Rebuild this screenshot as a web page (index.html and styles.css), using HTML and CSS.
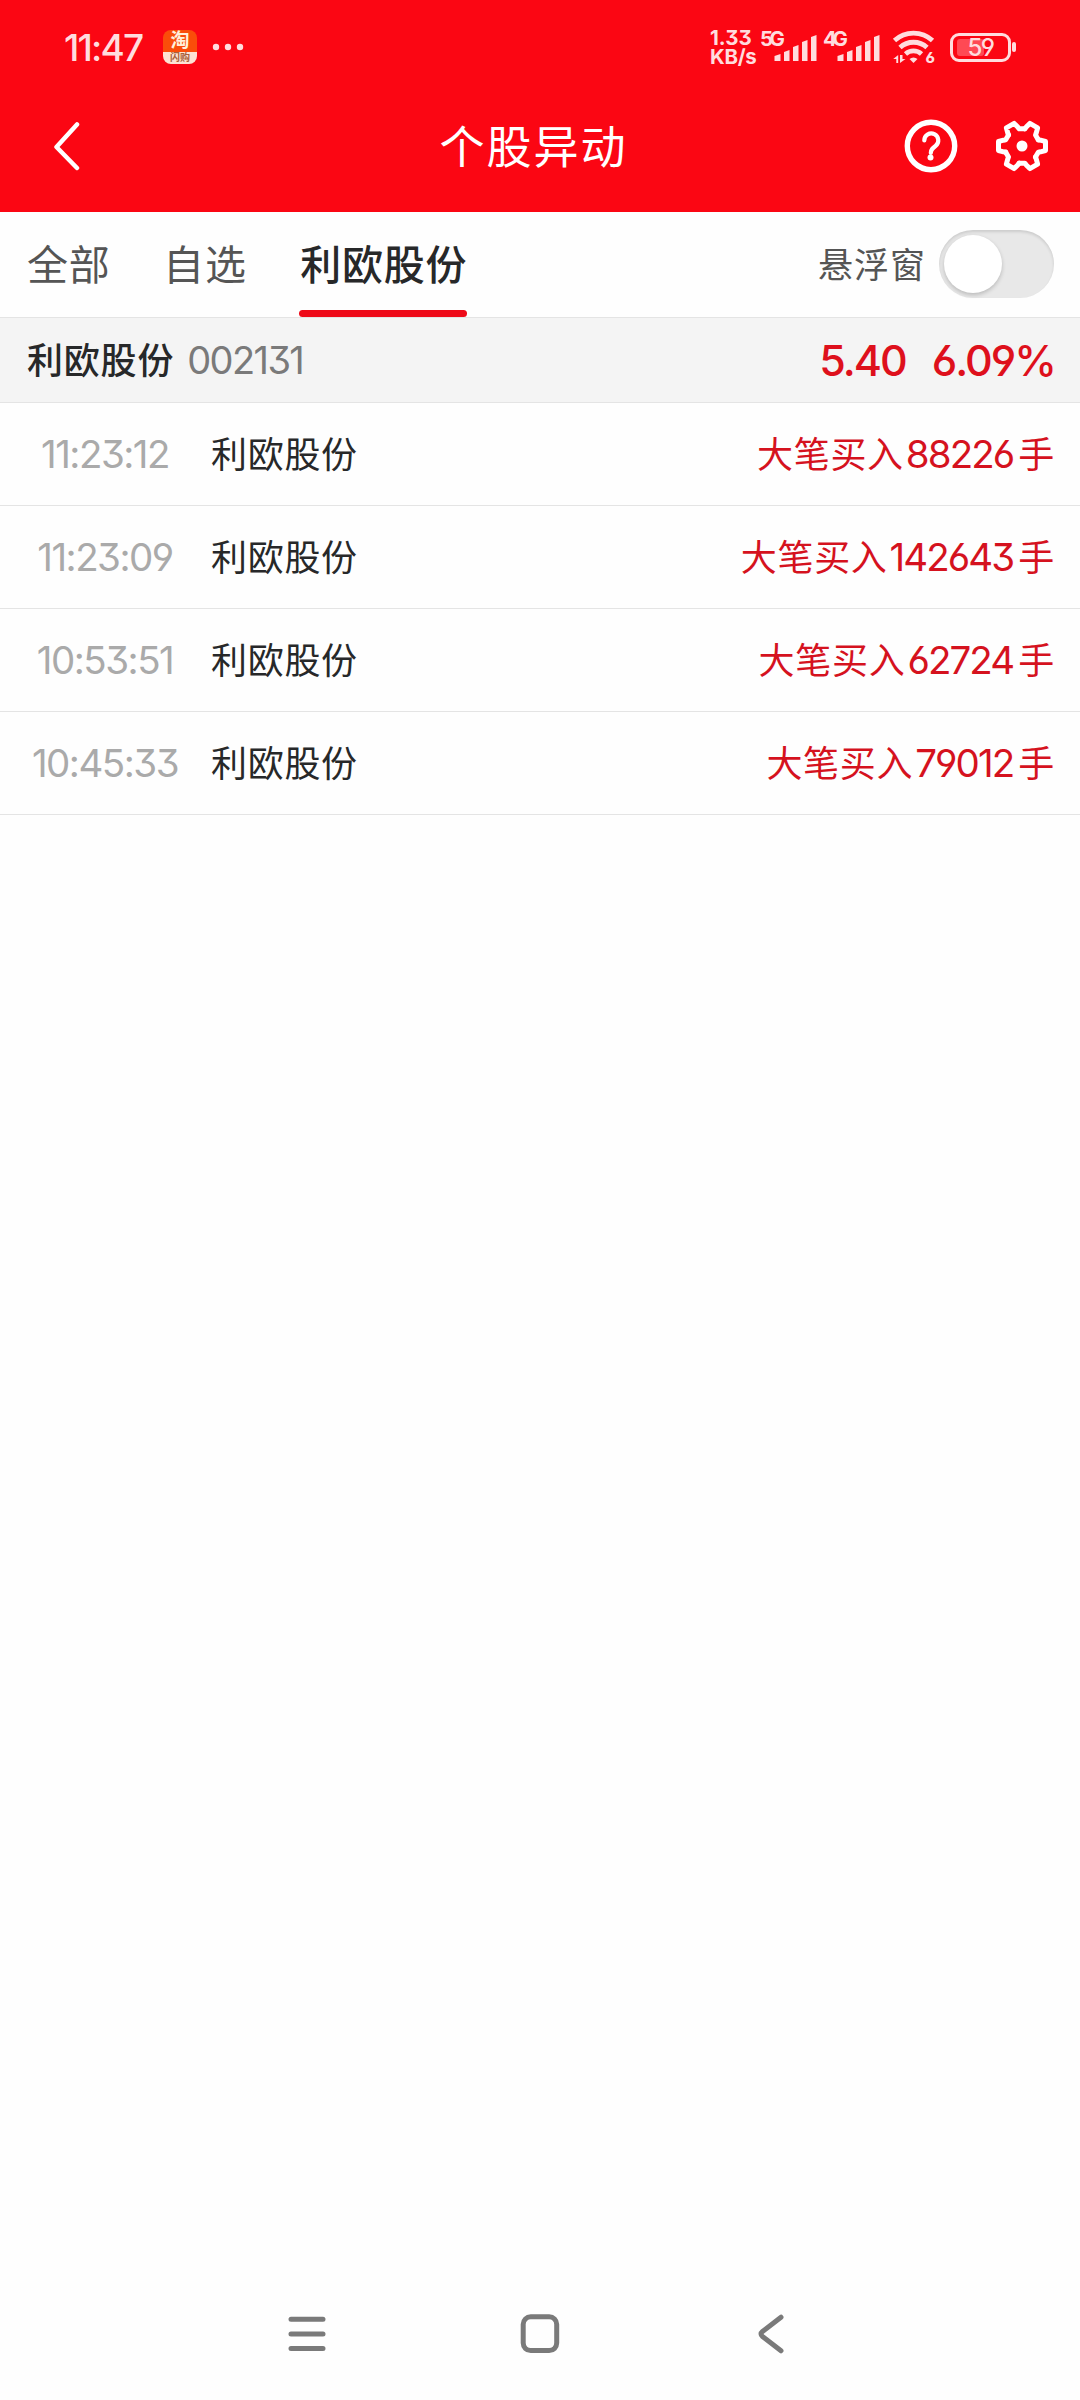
FILE: index.html
```html
<!DOCTYPE html>
<html lang="zh-CN">
<head>
    <meta charset="UTF-8">
    <title>个股异动</title>
    <link rel="stylesheet" href="styles.css">
</head>
<body>
    <header class="top">
        <div class="status-bar">
            <span class="clock">11:47</span>
            <div class="app-icon">
                <span class="app-main">淘</span>
                <span class="app-sub">闪购</span>
            </div>
            <svg class="dots" width="32" height="8" viewBox="0 0 32 8">
                <circle cx="4" cy="4" r="3.2"/><circle cx="16" cy="4" r="3.2"/><circle cx="28" cy="4" r="3.2"/>
            </svg>
            <div class="speed"><span class="speed-num">1.33</span><span>KB/s</span></div>
            <svg class="signal" width="58" height="36" viewBox="0 0 58 36">
                <text class="net" x="0" y="17" textLength="25">5G</text>
                <path d="M14.500 32v-5l6-2v7zM24 32V23l5.500-2v11zM33 32V18l5.500-2v16zM42 32V13l5.500-2v21zM51 32V8l5.500-2v26z"/>
            </svg>
            <svg class="signal" width="58" height="36" viewBox="0 0 58 36">
                <text class="net" x="0" y="17" textLength="25">4G</text>
                <path d="M14.500 32v-5l6-2v7zM24 32V23l5.500-2v11zM33 32V18l5.500-2v16zM42 32V13l5.500-2v21zM51 32V8l5.500-2v26z"/>
            </svg>
            <svg class="wifi" width="46" height="36" viewBox="0 0 46 36">
                <g class="arc">
                    <path d="M2.500 11.500a28 28 0 0 1 38 0"/>
                    <path d="M8 18.500a20 20 0 0 1 27 0"/>
                    <path d="M13.500 25a12 12 0 0 1 16 0"/>
                </g>
                <path d="M17.500 30a6 6 0 0 1 8 0l-4 4z"/>
                <path d="M4.300 34v-4H1.200L6.200 26v8zM8 34v-8h2.500v4h3z"/>
                <text class="wifi-gen" x="33.500" y="34">6</text>
            </svg>
            <div class="battery"><span class="battery-level"></span><span class="battery-num">59</span></div>
            <span class="battery-tip"></span>
        </div>
        <nav class="title-bar">
            <svg class="back" width="28" height="52" viewBox="0 0 28 52">
                <path d="M25 4.500L4.500 27l20.500 21"/>
            </svg>
            <h1>个股异动</h1>
            <div class="actions">
                <svg width="54" height="54" viewBox="0 0 54 54">
                    <circle cx="27" cy="27" r="23.700" stroke-width="5.400"/>
                    <path d="M20.300 21.500a7 7 0 1 1 11.200 5.500c-3 2.300-4.700 3.600-4.700 7" stroke-width="4.200"/>
                    <circle class="solid" cx="26.500" cy="38.500" r="3"/>
                </svg>
                <svg width="54" height="54" viewBox="-27 -27 54 54">
                    <g stroke-width="5">
                        <path id="tooth" d="M16.300-6.200L18.500-5.800 23.500-4.500V4.500L18.500 5.800 16.300 6.200 13.500 11"/>
                        <use href="#tooth" transform="rotate(60)"/>
                        <use href="#tooth" transform="rotate(120)"/>
                        <use href="#tooth" transform="rotate(180)"/>
                        <use href="#tooth" transform="rotate(240)"/>
                        <use href="#tooth" transform="rotate(300)"/>
                    </g>
                    <circle class="solid" cx="0" cy="0" r="5.500"/>
                </svg>
            </div>
        </nav>
    </header>

    <div class="tabs">
        <span class="tab">全部</span>
        <span class="tab">自选</span>
        <span class="tab active">利欧股份</span>
        <span class="float-label">悬浮窗</span>
        <span class="switch"></span>
    </div>

    <div class="stock">
        <span class="stock-name">利欧股份</span>
        <span class="stock-code">002131</span>
        <span class="price">5.40</span>
        <span class="percent">6.09%</span>
    </div>

    <ul class="list">
        <li><span class="time">11:23:12</span><span class="name">利欧股份</span><span class="event">大笔买入<b>88226</b>手</span></li>
        <li><span class="time">11:23:09</span><span class="name">利欧股份</span><span class="event">大笔买入<b>142643</b>手</span></li>
        <li><span class="time">10:53:51</span><span class="name">利欧股份</span><span class="event">大笔买入<b>62724</b>手</span></li>
        <li><span class="time">10:45:33</span><span class="name">利欧股份</span><span class="event">大笔买入<b>79012</b>手</span></li>
    </ul>

    <!-- 系统导航键 -->
    <footer class="nav-keys">
        <svg width="42" height="44" viewBox="0 0 42 44"><path d="M5 7.300h32M5 22h32M5 36.600h32"/></svg>
        <svg width="42" height="44" viewBox="0 0 42 44"><rect x="4.200" y="4.800" width="33.500" height="33.800" rx="7.500"/></svg>
        <svg width="42" height="44" viewBox="0 0 42 44"><path d="M30 5.200L11.500 19.500q-3 2.500 0 5L30 38.800"/></svg>
    </footer>
</body>
</html>
```
FILE: styles.css
```css
* {
    box-sizing: border-box;
}
body {
    margin: 0;
    width: 1080px;
    height: 2400px;
    display: flex;
    flex-direction: column;
    background: #fefefe;
    color: #272829;
    font-family: Inter, 'Noto Sans CJK SC', sans-serif;
    font-feature-settings: "cv03", "cv04", "cv09";
}
.top {
    height: 212px;
    background: #fb0613;
    color: #fff;
}
.status-bar {
    height: 80px;
    padding: 14px 0 0 64px;
    display: flex;
    align-items: center;
    color: #ffdcde;
    fill: #ffdcde;
}
.clock {
    width: 99px;
    font-size: 37px;
    font-weight: 500;
    letter-spacing: -1.8px;
}
.app-icon {
    width: 34px;
    height: 34px;
    border-radius: 8px;
    overflow: hidden;
    display: flex;
    flex-direction: column;
    align-items: center;
    background: linear-gradient(#fa4d0a 0, #fa4d0a 65%, #fde3d3 65%);
}
.app-main {
    height: 22px;
    line-height: 22px;
    font-size: 19px;
    font-weight: 700;
    color: #fff0dc;
}
.app-sub {
    line-height: 11px;
    font-size: 10px;
    font-weight: 700;
    color: #a8603a;
}
.dots {
    margin-left: 15px;
}
.speed {
    width: 50px;
    margin-left: 466px;
    display: flex;
    flex-direction: column;
    font-size: 20.500px;
    line-height: 19px;
    font-weight: 700;
    letter-spacing: -0.3px;
}
.speed-num {
    letter-spacing: 0;
}
.signal {
    margin-right: 5px;
    overflow: visible;
}
.net {
    font-size: 20.500px;
    font-weight: 700;
}
.wifi {
    margin-left: 6px;
    overflow: visible;
}
.arc {
    fill: none;
    stroke: #ffdcde;
    stroke-width: 4.800;
}
.wifi-gen {
    font-size: 15px;
    font-weight: 800;
}
.battery {
    position: relative;
    width: 61px;
    height: 29px;
    margin-left: 12px;
    border: 3px solid #ffdcde;
    border-radius: 9px;
    display: flex;
    align-items: center;
    justify-content: center;
}
.battery-level {
    position: absolute;
    left: 4px;
    top: 3px;
    width: 27px;
    height: 17px;
    border-radius: 3px;
    background: #ff4954;
}
.battery-num {
    position: relative;
    font-size: 24px;
    line-height: 23px;
    font-weight: 500;
    letter-spacing: -1.6px;
}
.battery-tip {
    width: 4px;
    height: 10px;
    margin-left: 1px;
    border-radius: 2px;
    background: #ffdcde;
}
.title-bar {
    height: 132px;
    padding: 0 30px 0 52px;
    display: grid;
    grid-template-columns: 146px 1fr 146px;
    align-items: center;
}
.title-bar svg {
    fill: none;
    stroke: #fff;
    stroke-linecap: round;
    stroke-linejoin: round;
}
.title-bar .back {
    stroke-width: 4.500;
}
.title-bar .solid {
    fill: #fff;
    stroke: none;
}
h1 {
    margin: 0 35px 4px 0;
    text-align: center;
    font-size: 45px;
    font-weight: 400;
    letter-spacing: 2px;
}
.actions {
    padding-right: 1px;
    display: flex;
    justify-content: space-between;
}
.tabs {
    height: 106px;
    padding: 0 26px 0 27px;
    display: flex;
    align-items: center;
    border-bottom: 1px solid #e4e4e4;
}
.tab {
    height: 105px;
    line-height: 106px;
    margin-right: 52.500px;
    font-size: 41px;
    letter-spacing: 0.8px;
    color: #555;
}
.tab.active {
    position: relative;
    padding-left: 1px;
    color: #272829;
    font-weight: 500;
}
.tab.active::after {
    content: '';
    position: absolute;
    left: 0;
    bottom: 0;
    width: 168px;
    height: 7px;
    border-radius: 4px;
    background: #ee0a18;
}
.float-label {
    margin-left: auto;
    margin-right: 13px;
    padding-bottom: 4px;
    font-size: 35px;
    letter-spacing: 1px;
    color: #555;
}
.switch {
    width: 115px;
    height: 68px;
    margin-bottom: 2px;
    padding: 5px;
    border-radius: 34px;
    background: #e8e8e8;
    box-shadow: inset 0 2px 3px rgba(0, 0, 0, 0.12);
}
.switch::before {
    content: '';
    display: block;
    width: 58px;
    height: 58px;
    border-radius: 50%;
    background: #fff;
    box-shadow: 0 2px 4px rgba(0, 0, 0, 0.2);
}
.stock {
    height: 85px;
    padding: 0 25px 0 27px;
    display: flex;
    align-items: center;
    background: #f4f4f4;
    border-bottom: 1px solid #e4e4e4;
}
.stock-name {
    padding-bottom: 4px;
    font-size: 36px;
    font-weight: 500;
    letter-spacing: 0.8px;
}
.stock-code {
    margin-left: 13px;
    font-size: 38px;
    letter-spacing: -1.6px;
    color: #7a7a7a;
}
.price,
.percent {
    font-size: 43px;
    font-weight: 500;
    letter-spacing: -2px;
    color: #de101c;
}
.price {
    margin-left: auto;
}
.percent {
    margin-left: 26px;
}
.list {
    margin: 0;
    padding: 0;
    list-style: none;
}
.list li {
    height: 103px;
    padding-right: 25px;
    display: flex;
    align-items: center;
    border-bottom: 1px solid #e4e4e4;
    font-size: 36px;
    letter-spacing: 0.7px;
}
.time {
    width: 211px;
    padding-right: 1px;
    text-align: center;
    font-size: 38.500px;
    letter-spacing: -1.500px;
    color: #aaa;
}
.name,
.event {
    padding-bottom: 4px;
}
.event {
    margin-left: auto;
    color: #d5121e;
}
.event b {
    margin: 0 5px 0 2px;
    font-size: 38.500px;
    font-weight: 400;
    letter-spacing: -1.9px;
}
.nav-keys {
    margin-top: auto;
    height: 132px;
    padding: 0 287px 0 286px;
    display: flex;
    justify-content: space-between;
    align-items: center;
    fill: none;
    stroke: #7a7a7a;
    stroke-width: 5;
    stroke-linecap: round;
}
```
